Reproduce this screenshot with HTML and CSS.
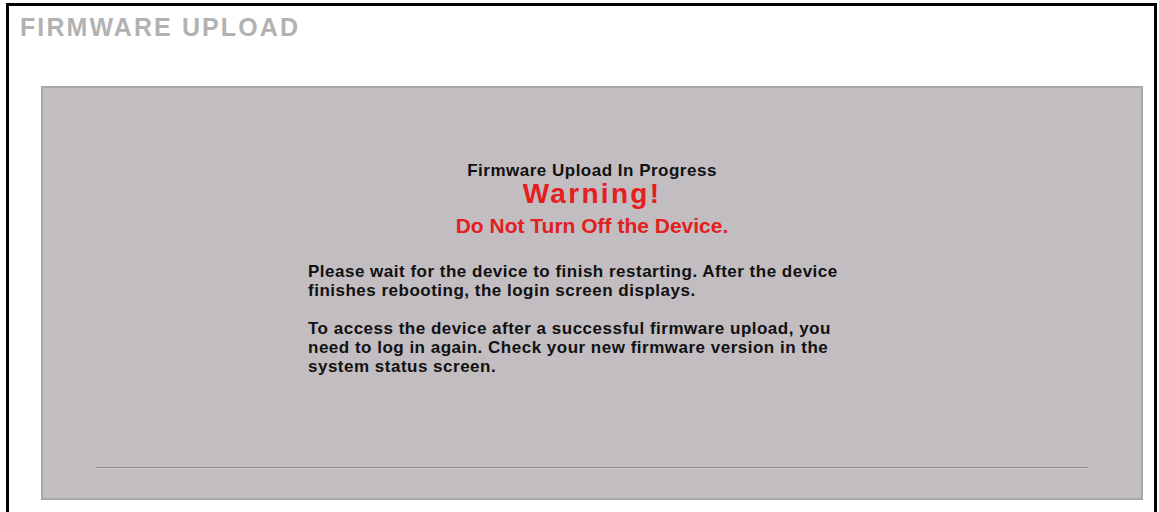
FILE: index.html
```html
<!DOCTYPE html>
<html>
<head>
<meta charset="utf-8">
<link rel="stylesheet" href="styles.css">
</head>
<body>
<div class="frame">
  <h1 class="title">FIRMWARE UPLOAD</h1>
  <div class="panel">
    <div class="heading">Firmware Upload In Progress</div>
    <div class="warning">Warning!</div>
    <div class="warning-sub">Do Not Turn Off the Device.</div>
    <div class="message">
      <p>Please wait for the device to finish restarting. After the device<br>finishes rebooting, the login screen displays.</p>
      <p>To access the device after a successful firmware upload, you<br>need to log in again. Check your new firmware version in the<br>system status screen.</p>
    </div>
    <div class="rule"></div>
  </div>
</div>
</body>
</html>
```

FILE: styles.css
```css
html, body {
  margin: 0;
  padding: 0;
  background: #ffffff;
}
body {
  font-family: "Liberation Sans", Arial, sans-serif;
}
.frame {
  margin: 3px 0 0 6px;
  width: 1145px;
  height: 520px;
  border: 3px solid #000;
  border-bottom: none;
}
.title {
  margin: 6px 0 0 11px;
  font-size: 25px;
  line-height: 30px;
  font-weight: bold;
  letter-spacing: 2.1px;
  color: #b2b2b2;
}
.panel {
  margin: 44px 0 0 32px;
  width: 1098px;
  height: 410px;
  background: #c1bdc1;
  border: 2px solid #aaa7aa;
  display: flex;
  flex-direction: column;
  align-items: center;
}
.heading {
  margin-top: 74px;
  font-size: 17px;
  line-height: 18px;
  font-weight: bold;
  letter-spacing: 0.5px;
  color: #111;
}
.warning {
  margin-top: 0;
  font-size: 28px;
  line-height: 28px;
  font-weight: bold;
  letter-spacing: 2.3px;
  color: #e3201e;
}
.warning-sub {
  margin-top: 7px;
  font-size: 21px;
  line-height: 22px;
  font-weight: bold;
  color: #e3201e;
}
.message {
  width: 568px;
  margin-top: 25px;
  font-size: 17px;
  line-height: 19px;
  font-weight: bold;
  letter-spacing: 0.5px;
  color: #111;
}
.message p {
  margin: 0 0 19px 0;
}
.rule {
  margin-top: auto;
  margin-bottom: 29px;
  width: 992px;
  height: 1px;
  background: #8e8b8e;
  border-bottom: 1px solid #cfcbcf;
}
```
